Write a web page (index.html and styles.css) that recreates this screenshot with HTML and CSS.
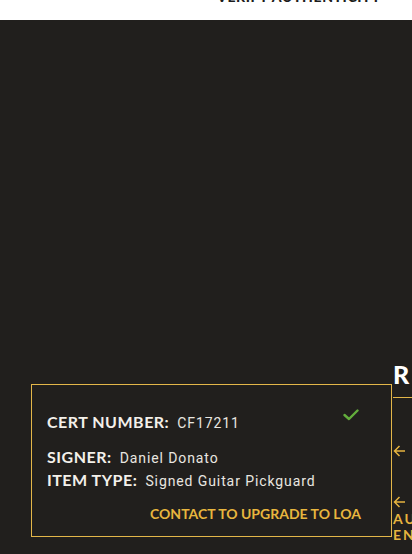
FILE: index.html
```html
<!DOCTYPE html>
<html lang="en">
<head>
  <meta charset="UTF-8" />
  <meta name="viewport" content="width=device-width, initial-scale=1" />
  <title>Verify Authenticity</title>
  <link rel="stylesheet" href="styles.css">
</head>
<body>
  <div class="topbar">
    <span class="topbar-title">VERIFY AUTHENTICITY</span>
  </div>
  <div class="content">
    <div class="cert-col">
      <div class="cert-box">
        <div class="cert-row first">
          <span><span class="label">CERT NUMBER:</span> <span class="value">CF17211</span></span>
          <svg class="check" width="16" height="12" viewBox="0 0 16 12">
            <polyline points="1.5,6 6,10 14.5,1.5" fill="none" stroke="#63ad3c" stroke-width="2.4" stroke-linecap="round" stroke-linejoin="round"/>
          </svg>
        </div>
        <div class="cert-row"><span class="label">SIGNER:</span> <span class="value">Daniel Donato</span></div>
        <div class="cert-row"><span class="label">ITEM TYPE:</span> <span class="value">Signed Guitar Pickguard</span></div>
        <div class="upgrade"><a href="#">CONTACT TO UPGRADE TO LOA</a></div>
      </div>
    </div>
    <div class="sidebar">
      <h2>RESOURCES</h2>
      <a class="side-link one" href="#">
        <svg class="arrow" width="13" height="12" viewBox="0 0 13 12"><path d="M12 6H1.5M6.5 1L1.5 6l5 5" fill="none" stroke="#e6b43f" stroke-width="1.5"/></svg>
        <span class="side-text">BACK</span>
      </a>
      <a class="side-link two" href="#">
        <svg class="arrow" width="13" height="12" viewBox="0 0 13 12"><path d="M12 6H1.5M6.5 1L1.5 6l5 5" fill="none" stroke="#e6b43f" stroke-width="1.5"/></svg>
        <span class="side-line">AUTHENTICATION</span>
        <span class="side-line">ENCYCLOPEDIA</span>
      </a>
    </div>
  </div>
</body>
</html>
```

FILE: styles.css
```css
body {
  margin: 0;
  background: #211f1d;
  color: #efece6;
  font-family: Lato, "Open Sans", sans-serif;
  overflow: hidden;
}
.topbar {
  height: 20px;
  background: #fff;
  overflow: hidden;
  display: flex;
  justify-content: flex-end;
  align-items: flex-end;
  padding: 0 31px 15px 0;
  box-sizing: border-box;
}
.topbar-title {
  font-weight: 900;
  font-size: 14px;
  letter-spacing: 0.6px;
  line-height: 16px;
  color: #1c1c1c;
}
.content {
  display: flex;
  align-items: flex-start;
  padding-left: 31px;
  margin-top: 340px;
}
.cert-col {
  flex-shrink: 0;
  width: 361px;
  padding-top: 24px;
}
.cert-box {
  border: 1px solid #e3b649;
  padding: 27px 30px 12px 15px;
}
.cert-row {
  height: 23px;
  line-height: 23px;
  white-space: nowrap;
}
.cert-row.first {
  display: flex;
  justify-content: space-between;
  align-items: flex-start;
  height: 20px;
  line-height: 20px;
  margin-bottom: 13px;
}
.check {
  margin: -3px 2px 0 0;
}
.label {
  font-weight: 700;
  font-size: 16px;
  letter-spacing: 0.5px;
  color: #f3f0ea;
  margin-right: 4px;
}
.value {
  font-family: Roboto, sans-serif;
  font-size: 14px;
  letter-spacing: 0.9px;
  color: #e9e6e0;
}
.upgrade {
  margin-top: 12px;
  text-align: right;
  line-height: 20px;
}
.upgrade a {
  color: #e8b63e;
  font-weight: 700;
  font-size: 14px;
  text-decoration: none;
}
.sidebar {
  flex-shrink: 0;
  width: 200px;
  margin-left: 1px;
  margin-top: -1px;
}
.sidebar h2 {
  margin: 0;
  font-size: 25px;
  line-height: 30px;
  font-weight: 900;
  letter-spacing: 2px;
  color: #fff;
  padding-bottom: 8px;
  border-bottom: 1px solid #e3b649;
}
.side-link {
  display: block;
  color: #e6b43f;
  text-decoration: none;
  font-weight: 700;
  font-size: 14px;
  letter-spacing: 2px;
  line-height: 16px;
}
.side-link.one {
  margin-top: 45px;
  display: flex;
  align-items: center;
  gap: 8px;
}
.side-link.two {
  margin-top: 37px;
}
.side-link .arrow {
  display: block;
}
.side-link.two .arrow {
  margin-bottom: 3px;
}
.side-line {
  display: block;
}
.side-text {
  margin-left: 4px;
}
```
